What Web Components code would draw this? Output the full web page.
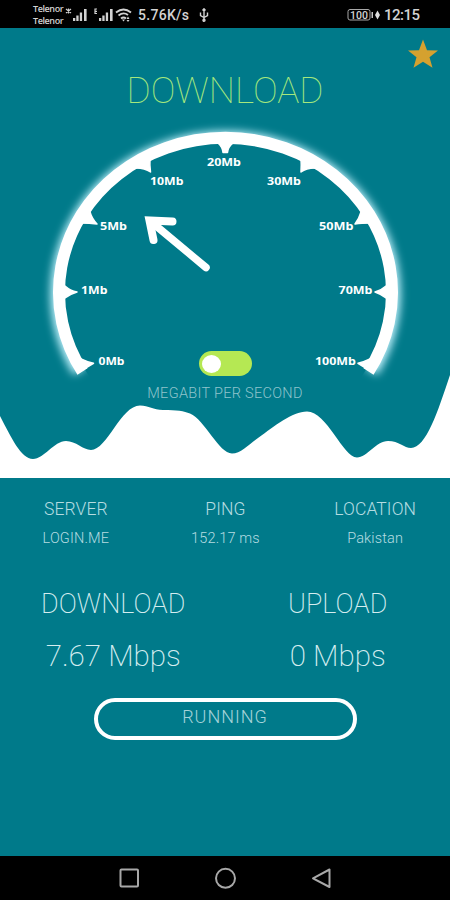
<!DOCTYPE html>
<html lang="en">
<head>
<meta charset="utf-8">
<title>Speed Test</title>
<style>
    body {
        margin: 0;
        background: #007a8a;
        font-family: Roboto, sans-serif;
    }
</style>
</head>
<body>
<speed-app></speed-app>

<script>
// Android status bar: carriers, signal, network speed, battery and clock
class StatusBar extends HTMLElement {
    constructor() {
        super();
        this.attachShadow({ mode: "open" });
        this.shadowRoot.innerHTML = `
        <style>
            :host {
                display: flex;
                align-items: center;
                box-sizing: border-box;
                height: 28px;
                padding: 2px 31px 0 33px;
                background: #000;
                color: #d2d2d2;
                font-size: 14px;
            }
            .carriers {
                width: 32px;
                font: 600 9px/12px "Open Sans", sans-serif;
                letter-spacing: -0.4px;
            }
            .carriers div { height: 12px; }
            svg { display: block; flex: none; }
            .speed { margin-left: 6px; width: 53px; font-weight: 500; letter-spacing: 0.3px; }
            .usb { margin-left: 8px; }
            .right { margin-left: auto; display: flex; align-items: center; gap: 3px; }
            .clock { font-size: 15px; font-weight: 500; width: 35px; letter-spacing: -0.5px; }
        </style>
        <div class="carriers"><div>Telenor</div><div>Telenor</div></div>
        <svg width="67" height="18" viewBox="65 5 67 18" fill="#d2d2d2">
            <path d="M66 8l5 4M71 8l-5 4M68.500 7.500v5" stroke="#d2d2d2" stroke-width="1.2"/>
            <path d="M73 17h2.300v3h-2.300zM76.300 14.500h2.300v5.500h-2.300zM79.800 11.500h2.300v8.500h-2.300zM84 8h2.600V20H84z"/>
            <path d="M97 8h-2v4.500h2M95 10.300h2" fill="none" stroke="#d2d2d2" stroke-width="1.200"/>
            <path d="M99 17h2.300v3h-2.300zM102.300 14.500h2.300v5.500h-2.300zM105.800 11.500h2.300v8.500h-2.300zM110 8h2.600V20H110z"/>
            <g fill="none" stroke="#d2d2d2" stroke-width="1.900">
                <path d="M116 11.500q7.500-6 15 0M118.500 14.500q5-4 9.500-.5M121 17.500q2.500-2 5 0"/>
            </g>
            <path d="M122 18.500h3l-1.500 2zM128 15.500l1.500 2.500h-3zM126.500 19h3l-1.500 2z"/>
        </svg>
        <div class="speed">5.76K/s</div>
        <svg class="usb" width="10" height="14" viewBox="0 0 10 14" fill="none" stroke="#d2d2d2" stroke-width="1.400">
            <path d="M5 1v11M1.500 4.500v3L5 9.500l3.500-2v-3M3.500 2.500L5 .8l1.500 1.700"/>
            <circle cx="5" cy="12.200" r="1" fill="#d2d2d2"/>
        </svg>
        <div class="right">
            <svg width="34" height="14" viewBox="0 0 34 14">
                <rect x="1" y="1.500" width="22" height="10.500" rx="2" fill="none" stroke="#a8a8a8"/>
                <path d="M24.500 4h1.500v6h-1.500z" fill="#c8c8c8"/>
                <text x="3" y="10.500" textLength="18" font-size="10.500" font-weight="500" fill="#d2d2d2" font-family="Roboto">100</text>
                <path d="M30.500 2.500l-2.500 4.500 2.500 4.500 2.500-4.500z" fill="#e0e0e0"/>
            </svg>
            <div class="clock">12:15</div>
        </div>
        `;
    }
}
customElements.define("status-bar", StatusBar);

// Half round dial with ticks, the needle is an arrow
class SpeedGauge extends HTMLElement {
    constructor() {
        super();
        this.attachShadow({ mode: "open" });

        // label, left edge, baseline, width
        const marks = [
            ["0Mb", 98.5, 364.5, 26],
            ["1Mb", 81, 293.5, 26.500],
            ["5Mb", 100, 230, 27],
            ["10Mb", 150, 185, 33.500],
            ["20Mb", 207, 166, 34],
            ["30Mb", 267, 185, 34],
            ["50Mb", 319, 230, 34.500],
            ["70Mb", 338.5, 293.5, 34],
            ["100Mb", 315, 364.5, 41]
        ];
        const labels = marks.map(([text, x, y, w]) =>
            `<text x="${x}" y="${y}" textLength="${w}" lengthAdjust="spacingAndGlyphs">${text}</text>`
        ).join("");

        this.shadowRoot.innerHTML = `
        <style>
            :host { display: block; height: 238px; }
            svg { display: block; overflow: visible; }
            text { font: bold 11.2px "Noto Sans", sans-serif; fill: #fff; }
        </style>
        <svg width="450" height="238" viewBox="0 119 450 238">
            <defs>
                <filter id="glow" x="-20%" y="-20%" width="140%" height="140%">
                    <feGaussianBlur stdDeviation="4.500"/>
                </filter>
                <clipPath id="outside">
                    <path clip-rule="evenodd" d="M0 90H450V420H0zM62 292.500A163.500 151.500 0 0 1 389 292.500A163.500 151.500 0 0 1 62 292.500z"/>
                </clipPath>
            </defs>
            <g clip-path="url(#outside)">
                <path d="M80 371A167.500 155.500 0 1 1 371 371" fill="none" stroke="#c4f4ff" stroke-width="15" filter="url(#glow)"/>
            </g>
            <path d="M82.500 371.500A166.500 154.500 0 1 1 368.500 371.500" fill="none" stroke="#fff" stroke-width="12"/>
            <g fill="#fff" stroke="#fff" stroke-width="1.500" stroke-linejoin="round">
                <path d="M81 359Q87 362 93.500 363.300L78 372.500z"/>
                <path d="M370 359Q364 362 358 363.300L373 372.500z"/>
                <path d="M65 286Q70 290.500 77 292Q70 294 65 298z"/>
                <path d="M386 286Q381 290.500 375 292Q381 294 386 298z"/>
                <path d="M90 212Q92 219 97 224Q90 223 80 223z"/>
                <path d="M361 212Q359 219 355 224Q361 223 371 223z"/>
                <path d="M150 158Q149.500 166 150.500 172Q145 168 136 168z"/>
                <path d="M301 158Q301.500 166 301 172Q306 168 315 168z"/>
                <path d="M218 143Q222.500 147 223 152.500H227.500Q228 147 233 143z"/>
            </g>
            ${labels}
            <g fill="none" stroke="#fff" stroke-linecap="round">
                <path d="M152 222.500L206 267.500" stroke-width="7.500"/>
                <path d="M153.500 240L149.500 220.500L172.500 221.500" stroke-width="8" stroke-linejoin="miter"/>
            </g>
        </svg>
        `;
    }
}
customElements.define("speed-gauge", SpeedGauge);

class ToggleSwitch extends HTMLElement {
    constructor() {
        super();
        this.attachShadow({ mode: "open" });
        this.shadowRoot.innerHTML = `
        <style>
            :host {
                display: flex;
                align-items: center;
                box-sizing: border-box;
                width: 53px;
                height: 25px;
                padding: 0 3.5px;
                border-radius: 13px;
                background: #b5e853;
            }
            .knob { width: 19px; height: 18px; border-radius: 50%; background: #fff; }
        </style>
        <div class="knob"></div>
        `;
    }
}
customElements.define("toggle-switch", ToggleSwitch);

class WaveShape extends HTMLElement {
    constructor() {
        super();
        this.attachShadow({ mode: "open" });
        this.shadowRoot.innerHTML = `
        <style>
            :host { display: block; height: 108px; }
            svg { display: block; }
        </style>
        <svg width="450" height="108" viewBox="0 370 450 108" fill="#fff">
            <path d="M0 416C11 437 21 459 33 459C44 459 54 441 66 441C76 441 83 450 91 450C107 450 121 405.500 140 405.500C149 405.500 153 410 163 410C177 410 184 411 190 413.500C205 420 219 453.500 232 453.500C241 453.500 249 444 258 438C275 426 292 411.500 307 411.500C327 411.500 343 457.500 357 457.500C367 457.500 376 441 388 441C399 441 404 448 411 448C426 448 438 411 450 375V478H0z"/>
        </svg>
        `;
    }
}
customElements.define("wave-shape", WaveShape);

// A title over a value, the value goes in the slot
class StatItem extends HTMLElement {
    constructor() {
        super();
        this.attachShadow({ mode: "open" });
        this.shadowRoot.innerHTML = `
        <style>
            :host {
                display: flex;
                flex-direction: column;
                align-items: center;
                gap: 11px;
                color: #b5dce1;
                font-weight: 300;
                white-space: nowrap;
            }
            .title { font-size: 17.5px; line-height: 20px; letter-spacing: 0.1px; }
            .value { font-size: 14.5px; line-height: 17px; letter-spacing: 0.15px; }
            :host([big]) { gap: 19px; font-weight: 200; color: #d5edf0; }
            :host([big]) .title { font-size: 27px; line-height: 32px; letter-spacing: 0; }
            :host([big]) .value { font-size: 29.5px; line-height: 34px; letter-spacing: 0; }
        </style>
        <div class="title">${this.getAttribute("title-text")}</div>
        <div class="value"><slot></slot></div>
        `;
    }
}
customElements.define("stat-item", StatItem);

class PillButton extends HTMLElement {
    constructor() {
        super();
        this.attachShadow({ mode: "open" });
        this.shadowRoot.innerHTML = `
        <style>
            :host { display: block; }
            button {
                display: block;
                box-sizing: border-box;
                width: 263px;
                height: 42px;
                padding: 0 0 6px;
                border: 4px solid #fff;
                border-radius: 21px;
                background: none;
                color: #a5d3d9;
                font: 300 18px Roboto, sans-serif;
                letter-spacing: 1px;
            }
        </style>
        <button><slot></slot></button>
        `;
    }
}
customElements.define("pill-button", PillButton);

class NavBar extends HTMLElement {
    constructor() {
        super();
        this.attachShadow({ mode: "open" });
        this.shadowRoot.innerHTML = `
        <style>
            :host {
                display: flex;
                justify-content: center;
                align-items: center;
                gap: 74px;
                height: 44px;
                background: #000;
            }
            svg { fill: none; stroke: #a8a8a8; stroke-width: 2; }
        </style>
        <svg width="22" height="22"><rect x="2.500" y="2.500" width="17.500" height="17" rx="1"/></svg>
        <svg width="22" height="22"><circle cx="11.500" cy="11.300" r="9.500"/></svg>
        <svg width="22" height="22"><path d="M19.500 2.500v17.500L3 11.300z" stroke-linejoin="round"/></svg>
        `;
    }
}
customElements.define("nav-bar", NavBar);

// The whole screen
class SpeedApp extends HTMLElement {
    constructor() {
        super();
        this.attachShadow({ mode: "open" });
        this.shadowRoot.innerHTML = `
        <style>
            :host {
                display: flex;
                flex-direction: column;
                width: 450px;
                height: 900px;
                overflow: hidden;
                background: #007a8a;
            }
            .hero { display: flex; flex-direction: column; align-items: center; height: 450px; }
            .top { align-self: flex-end; padding: 11px 11px 0 0; height: 30px; }
            .top svg { display: block; }
            h1 {
                margin: 0;
                padding-top: 1px;
                height: 50px;
                color: #a5e87d;
                font-size: 37px;
                font-weight: 150;
                line-height: 42px;
            }
            speed-gauge { align-self: stretch; }
            toggle-switch { margin-top: -6px; }
            .unit {
                height: 18px;
                margin: 9px 0 -33px;
                color: #8fc4cc;
                font-size: 14.5px;
                font-weight: 300;
                line-height: 18px;
                letter-spacing: 0.3px;
            }
            .details { display: grid; grid-template-columns: repeat(3, 1fr); margin: 21px 0 0 1px; }
            .results { display: grid; grid-template-columns: repeat(2, 1fr); margin: 41px 0 0 1px; }
            pill-button { align-self: center; margin-top: 25px; }
            nav-bar { margin-top: auto; }
        </style>
        <status-bar></status-bar>
        <div class="hero">
            <div class="top">
                <svg width="32" height="30" viewBox="0 0 32 30" fill="#d5a12f">
                    <path d="M16 .5L20 11.200L31 11.400L22.500 18.200L25.500 28.700L16 22.800L6.500 28.700L9.500 18.200L1 11.400L12 11.200z"/>
                </svg>
            </div>
            <h1>DOWNLOAD</h1>
            <speed-gauge></speed-gauge>
            <toggle-switch></toggle-switch>
            <div class="unit">MEGABIT PER SECOND</div>
            <wave-shape></wave-shape>
        </div>
        <div class="details">
            <stat-item title-text="SERVER">LOGIN.ME</stat-item>
            <stat-item title-text="PING">152.17 ms</stat-item>
            <stat-item title-text="LOCATION">Pakistan</stat-item>
        </div>
        <div class="results">
            <stat-item big title-text="DOWNLOAD">7.67 Mbps</stat-item>
            <stat-item big title-text="UPLOAD">0 Mbps</stat-item>
        </div>
        <pill-button>RUNNING</pill-button>
        <nav-bar></nav-bar>
        `;
    }
}
customElements.define("speed-app", SpeedApp);
</script>
</body>
</html>
